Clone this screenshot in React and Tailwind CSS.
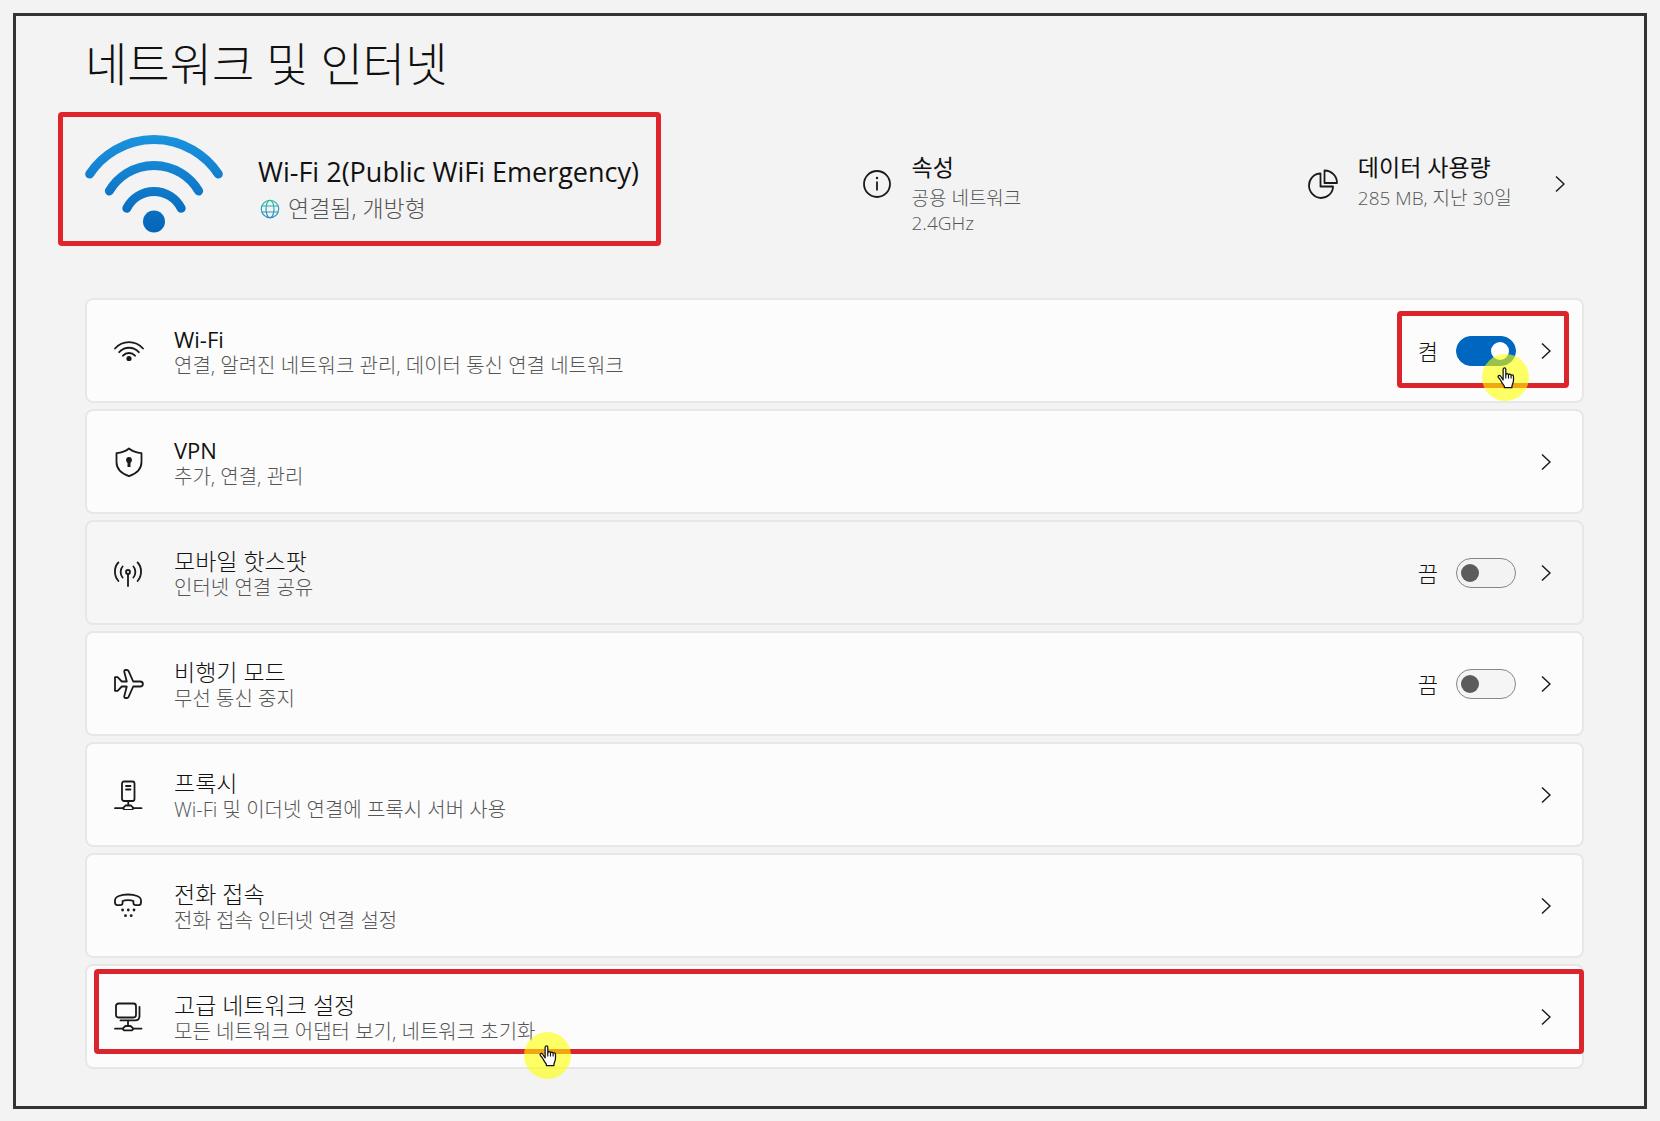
import { useState } from 'react';

const HAND_PATH =
  'M7 14.5V3.6C7 2.6 7.6 2 8.4 2s1.4.6 1.4 1.6v5.6c.2-.8.8-1.2 1.4-1.2.8 0 1.3.5 1.4 1.3.2-.5.7-.8 1.3-.8.8 0 1.3.6 1.4 1.4.2-.4.6-.6 1.1-.6.9 0 1.4.7 1.4 1.6v4c0 2.6-1.3 3.8-1.6 6.1v1.5H8.3v-1.5c-1-1.7-2.1-2.5-3.3-5.1-.7-1.4-1.7-2.7-2.7-3.6-.8-.8-.7-1.6-.2-2.1.6-.5 1.5-.4 2.2.2z';

function Icon({ children }) {
  return (
    <svg viewBox="0 0 30 30" className="size-[30px] shrink-0" fill="none" stroke="#1a1a1a" strokeWidth="1.8" strokeLinecap="round" strokeLinejoin="round" aria-hidden="true">
      {children}
    </svg>
  );
}

const WifiIcon = () => (
  <Icon>
    <path d="M1 12.5a18.5 18.5 0 0 1 28 0M5.200 16.200a13 13 0 0 1 19.600 0M9 19.700a8 8 0 0 1 12 0" />
    <circle cx="15" cy="22.5" r="1.7" fill="#1a1a1a" />
  </Icon>
);

const ShieldIcon = () => (
  <Icon>
    <path d="M15 1.500c3.500 2.900 7.500 4.300 12.500 4.700v8.800c0 7-4.700 11.500-12.500 14.200C7.200 26.500 2.500 22 2.500 15V6.200C7.500 5.800 11.500 4.400 15 1.500z" />
    <circle cx="15" cy="13" r="2" fill="#1a1a1a" />
    <path d="M15 14v6" strokeWidth="3" strokeLinecap="butt" />
  </Icon>
);

const HotspotIcon = () => (
  <Icon>
    <circle cx="14" cy="14" r="2" />
    <path d="M14 16.500V28" />
    <path d="M4.400 4.500C-.2 9-.2 18 4.400 23M23.600 4.500c4.600 4.500 4.600 13.500 0 18.500M8.600 8.500c-2.600 3-2.600 8 0 11M19.400 8.500c2.600 3 2.600 8 0 11" />
  </Icon>
);

const PlaneIcon = () => (
  <Icon>
    <path d="M1 8.200h2.600l4.200 4.300h5L10.300 3.100C10 1.800 10.600 1 11.600 1h1.200c.8 0 1.500.5 1.800 1.200l4.600 10.300h6.800c1.600 0 2.900 1 2.900 2.500s-1.300 2.500-2.900 2.500h-6.800l-4.600 10.300c-.3.700-1 1.200-1.800 1.200h-1.200c-1 0-1.600-.8-1.300-2.100l2.500-9.400h-5l-4.200 4.300H1z" />
  </Icon>
);

const ProxyIcon = () => (
  <Icon>
    <rect x="8" y="1.500" width="12.500" height="19.500" rx="2" />
    <path d="M12 6h4.500M12 9.500h4.500M14.250 21v3.500M1 28.200h7.500M20 28.200h7.500M11.500 25.500h5.500l2.500 2.700-1.500 1.700h-7.500l-1.500-1.700z" />
  </Icon>
);

const DialIcon = () => (
  <Icon>
    <path d="M1 9.500C1 5.500 7 3.500 14 3.500s13 2 13 6v2c0 1.700-.9 2.600-2.400 2.600h-2.800c-1.500 0-2.400-.9-2.400-2.400V10c-2.500-1.300-8.300-1.300-10.800 0v1.700c0 1.500-.9 2.400-2.400 2.400H3.400C1.900 14.100 1 13.200 1 11.500z" />
    <g fill="#1a1a1a" stroke="none">
      <circle cx="8.600" cy="19" r="1.400" />
      <circle cx="14.300" cy="19" r="1.400" />
      <circle cx="20" cy="19" r="1.400" />
      <circle cx="11.500" cy="24.700" r="1.400" />
      <circle cx="17.200" cy="24.700" r="1.400" />
    </g>
  </Icon>
);

const AdvancedIcon = () => (
  <Icon>
    <rect x="2" y="1.500" width="20" height="14" rx="2.500" />
    <path d="M25.500 5v9c0 2.800-1.500 4.400-4.400 4.400H6.500M14 18.500V23M1 26.700h7M20 26.700h7.500M11.500 24h5l3 2.700-1.500 1.700h-8L8.500 26.700z" />
  </Icon>
);

const ROWS = [
  { key: 'wifi', title: 'Wi-Fi', desc: '연결, 알려진 네트워크 관리, 데이터 통신 연결 네트워크', icon: WifiIcon, toggle: true, latin: true },
  { key: 'vpn', title: 'VPN', desc: '추가, 연결, 관리', icon: ShieldIcon, latin: true },
  { key: 'hotspot', title: '모바일 핫스팟', desc: '인터넷 연결 공유', icon: HotspotIcon, toggle: true, dim: true },
  { key: 'airplane', title: '비행기 모드', desc: '무선 통신 중지', icon: PlaneIcon, toggle: true },
  { key: 'proxy', title: '프록시', desc: 'Wi-Fi 및 이더넷 연결에 프록시 서버 사용', icon: ProxyIcon },
  { key: 'dialup', title: '전화 접속', desc: '전화 접속 인터넷 연결 설정', icon: DialIcon },
  { key: 'advanced', title: '고급 네트워크 설정', desc: '모든 네트워크 어댑터 보기, 네트워크 초기화', icon: AdvancedIcon },
];

function Chevron({ label }) {
  return (
    <button type="button" aria-label={label} className="shrink-0">
      <svg viewBox="0 0 10 18" className="h-[18px] w-[10px]" fill="none" stroke="#1a1a1a" strokeWidth="1.5" aria-hidden="true">
        <path d="M1 1.500 9 9l-8 7.500" />
      </svg>
    </button>
  );
}

function Pointer({ className }) {
  return (
    <span className={`pointer-events-none absolute grid size-[47px] place-items-center rounded-full bg-[#ffff00]/60 ${className}`}>
      <svg viewBox="0 0 20 25" className="h-[24px] w-[20px]" aria-hidden="true">
        <path d={HAND_PATH} fill="#fff" stroke="#111" strokeWidth="1.3" strokeLinejoin="round" />
        <path d="M9.800 9v4M12.600 9.500V13M15.300 10.500V13" stroke="#111" strokeWidth="1.2" fill="none" />
      </svg>
    </span>
  );
}

function Toggle({ id, checked, onChange }) {
  return (
    <div className="flex items-center gap-[18px]">
      <label htmlFor={id} className="text-[22px] leading-[26px]">{checked ? '켬' : '끔'}</label>
      <input
        id={id}
        type="checkbox"
        role="switch"
        checked={checked}
        onChange={onChange}
        className="flex h-[30px] w-[60px] appearance-none items-center rounded-full border border-[#868686] bg-[#f2f2f2]/80 px-1 before:size-[18px] before:rounded-full before:bg-[#5c5c5c] checked:justify-end checked:border-[#0067c0] checked:bg-[#0067c0] checked:px-1.5 checked:before:bg-white"
      />
    </div>
  );
}

function SettingRow({ row, checked, onToggle }) {
  const RowIcon = row.icon;
  return (
    <li className={`relative flex h-[105px] items-center rounded-lg border-2 border-[#e7e7e7] pr-[31px] pl-[27px] ${row.dim ? 'bg-[#f6f6f6]' : 'bg-[#fcfcfc]'}`}>
      <RowIcon />
      <div className="min-w-0 flex-1 pt-1 pl-[30px]">
        <h2 className={`leading-[26px] ${row.latin ? 'text-[22px] font-normal' : 'text-[23px] font-light'}`}>{row.title}</h2>
        <p className="text-[20px] leading-[28px] text-[#555]">{row.desc}</p>
      </div>
      <div className="flex items-center gap-[25px]">
        {row.toggle && <Toggle id={row.key} checked={checked} onChange={onToggle} />}
        <Chevron label={row.title} />
      </div>
      {row.key === 'wifi' && (
        <>
          <span className="pointer-events-none absolute top-[11px] right-[13px] h-[77px] w-[172px] rounded-sm border-[5px] border-[#db252c]" />
          <Pointer className="right-[53px] bottom-0" />
        </>
      )}
      {row.key === 'advanced' && (
        <>
          <span className="pointer-events-none absolute top-[3px] -right-[2px] left-[7px] h-[85px] rounded-sm border-[5px] border-[#db252c]" />
          <Pointer className="-bottom-[12px] left-[437px]" />
        </>
      )}
    </li>
  );
}

export default function App() {
  const [on, setOn] = useState({ wifi: true, hotspot: false, airplane: false });

  const toggle = (key) => setOn((s) => ({ ...s, [key]: !s[key] }));

  return (
    <div className="min-h-screen bg-[#f3f3f3] p-[13px] font-['Open_Sans','Noto_Sans_CJK_KR',sans-serif] font-light text-[#111]">
      <main className="border-[3px] border-[#333] pt-[17px] pr-[60px] pb-[37px] pl-[69px]">
        <h1 className="text-[46px] leading-[60px]">네트워크 및 인터넷</h1>

        <section className="mt-[19px] grid grid-cols-[776fr_446fr_276fr] items-start">
          <div className="relative flex h-[134px] items-center justify-self-start pt-[10px] pr-[22px]">
            <svg viewBox="0 0 138 98" className="h-[98px] w-[138px] shrink-0" fill="none" strokeWidth="9" strokeLinecap="round" aria-hidden="true">
              <defs>
                <linearGradient id="wifi-blue" gradientUnits="userSpaceOnUse" x1="0" y1="0" x2="0" y2="98">
                  <stop offset="0" stopColor="#1b93df" />
                  <stop offset="1" stopColor="#0664b8" />
                </linearGradient>
              </defs>
              <g stroke="url(#wifi-blue)">
                <path d="M4.700 39a77.200 77.200 0 0 1 128.600 0" />
                <path d="M24.300 56a51.900 51.900 0 0 1 89.400 0" />
                <path d="M41.800 73.300a30.400 30.400 0 0 1 54.400 0" />
              </g>
              <circle cx="69" cy="86.5" r="11" fill="url(#wifi-blue)" />
            </svg>
            <div className="pt-3 pl-[35px]">
              <h2 className="text-[27px] leading-[37px] font-normal whitespace-nowrap">Wi-Fi 2(Public WiFi Emergency)</h2>
              <p className="flex items-center gap-2 text-[23px] leading-[37px] text-[#555]">
                <svg viewBox="0 0 20 20" className="ml-0.5 size-[20px]" fill="none" stroke="url(#globe-teal)" strokeWidth="1.2" aria-hidden="true">
                  <defs>
                    <linearGradient id="globe-teal" gradientUnits="userSpaceOnUse" x1="0" y1="0" x2="0" y2="20">
                      <stop offset="0" stopColor="#2fc09c" />
                      <stop offset="1" stopColor="#2488d0" />
                    </linearGradient>
                  </defs>
                  <circle cx="10" cy="10" r="8.7" />
                  <ellipse cx="10" cy="10" rx="4" ry="8.7" />
                  <path d="M2 7h16M2 13h16" />
                </svg>
                연결됨, 개방형
              </p>
            </div>
            <span className="pointer-events-none absolute inset-y-0 right-0 -left-[27px] rounded-sm border-[5px] border-[#e0242b]" />
          </div>

          <div className="flex gap-[20px] pt-[40px]">
            <svg viewBox="0 0 30 30" className="mt-[17px] size-[30px] shrink-0" fill="none" stroke="#1a1a1a" strokeWidth="1.8" aria-hidden="true">
              <circle cx="15" cy="15" r="13" />
              <path d="M15 12.500v9" />
              <circle cx="15" cy="9" r="1.2" fill="#1a1a1a" stroke="none" />
            </svg>
            <div>
              <h2 className="pb-1 text-[23px] leading-[30px] font-normal">속성</h2>
              <p className="text-[19px] leading-[25px] text-[#555]">공용 네트워크</p>
              <p className="text-[19px] leading-[25px] text-[#555]">2.4GHz</p>
            </div>
          </div>

          <div className="flex pt-[40px] pr-[19px]">
            <svg viewBox="0 0 30 30" className="mt-[17px] size-[30px] shrink-0" fill="none" stroke="#1a1a1a" strokeWidth="1.8" strokeLinejoin="round" aria-hidden="true">
              <path d="M16.500 1.500v12.500H29C29 7 23.500 1.500 16.500 1.500z" />
              <path d="M12.500 4.500C6 4.500 1 10 1 16.500S6.500 29 13 29s12-5 12-11.500H12.500z" />
            </svg>
            <div className="flex-1 pb-1 pl-[20px]">
              <h2 className="pb-1 text-[23px] leading-[30px] font-normal whitespace-nowrap">데이터 사용량</h2>
              <p className="text-[19px] leading-[25px] whitespace-nowrap text-[#555]">285 MB, 지난 30일</p>
            </div>
            <Chevron label="데이터 사용량" />
          </div>
        </section>

        <ul className="mt-[52px] flex flex-col gap-1.5">
          {ROWS.map((row) => (
            <SettingRow key={row.key} row={row} checked={!!on[row.key]} onToggle={() => toggle(row.key)} />
          ))}
        </ul>
      </main>
    </div>
  );
}
